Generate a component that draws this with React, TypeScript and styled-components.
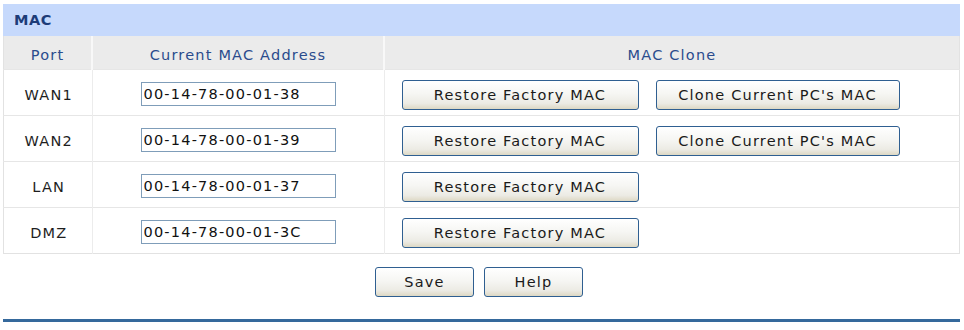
import * as React from 'react'
import styled, { createGlobalStyle } from 'styled-components'

const GlobalStyle = createGlobalStyle`
  html, body {
    margin: 0;
    padding: 0;
    background: #ffffff;
  }
  body {
    font-family: 'DejaVu Sans', Verdana, sans-serif;
  }
`

const Page = styled.div`
  width: 957px;
  padding: 4px 4px 0 3px;
`

const TitleBar = styled.div`
  height: 32px;
  line-height: 32px;
  padding-left: 11px;
  background: #c6d9fc;
  color: #1d3c78;
  font-weight: bold;
  font-size: 14.5px;
  letter-spacing: 0.6px;
`

const Table = styled.table`
  width: 100%;
  border-collapse: collapse;
  border: 1px solid #e2e2e2;
  border-top: none;
  table-layout: fixed;
`

const HeadCell = styled.th<{ $w?: number }>`
  ${({ $w }) => ($w ? `width: ${$w}px;` : '')}
  height: 29px;
  padding: 4px 0 0 0;
  background: #ebebeb;
  color: #2a4b8d;
  font-weight: normal;
  font-size: 14.5px;
  letter-spacing: 1.2px;
  text-align: center;
  border-left: 2px solid #f8f8f8;
  &:first-child {
    border-left: none;
  }
`

const Cell = styled.td<{ $align?: string }>`
  height: 41px;
  padding: 4px 0 0 0;
  border-top: 1px solid #e6e6e6;
  border-left: 1px solid #ececec;
  text-align: ${({ $align }) => $align || 'center'};
  vertical-align: middle;
  font-size: 14.5px;
  letter-spacing: 1.2px;
  color: #1e1e1e;
  &:first-child {
    border-left: none;
  }
`

const PortLabel = styled.span`
  display: inline-block;
  padding-left: 2px;
`

const MacInput = styled.input`
  box-sizing: border-box;
  display: block;
  width: 195px;
  height: 24px;
  margin: 0 auto 2px auto;
  padding: 0 2px;
  border: 1px solid #7f9db9;
  font-family: 'DejaVu Sans', Verdana, sans-serif;
  font-size: 14.5px;
  letter-spacing: 1.2px;
  color: #111;
  background: #fff;
  outline: none;
`

const ButtonRow = styled.div`
  display: flex;
  align-items: center;
  gap: 17px;
  padding-left: 17px;
`

const Button = styled.button<{ $w: number }>`
  box-sizing: border-box;
  width: ${({ $w }) => $w}px;
  height: 30px;
  padding: 0;
  border: 1px solid #2f5f91;
  border-radius: 3px;
  background: linear-gradient(
    to bottom,
    #ffffff 0%,
    #f6f6f3 45%,
    #ecebe4 80%,
    #ddd8c4 100%
  );
  color: #1a1a1a;
  font-family: 'DejaVu Sans', Verdana, sans-serif;
  font-size: 14.5px;
  letter-spacing: 1.2px;
  cursor: pointer;
`

const Footer = styled.div`
  display: flex;
  justify-content: center;
  gap: 10px;
  padding: 13px 0 0 0;
  margin-left: -5px;
`

const BottomRule = styled.div`
  height: 3px;
  margin-top: 22px;
  background: #35699c;
`

interface IPortRow {
  port: string
  mac: string
  canClone: boolean
}

const rows: IPortRow[] = [
  { port: 'WAN1', mac: '00-14-78-00-01-38', canClone: true },
  { port: 'WAN2', mac: '00-14-78-00-01-39', canClone: true },
  { port: 'LAN', mac: '00-14-78-00-01-37', canClone: false },
  { port: 'DMZ', mac: '00-14-78-00-01-3C', canClone: false }
]

export default function App() {
  return (
    <Page>
      <GlobalStyle />
      <TitleBar>MAC</TitleBar>
      <Table>
        <thead>
          <tr>
            <HeadCell $w={87}>Port</HeadCell>
            <HeadCell $w={290}>Current MAC Address</HeadCell>
            <HeadCell>MAC Clone</HeadCell>
          </tr>
        </thead>
        <tbody>
          {rows.map(row => (
            <tr key={row.port}>
              <Cell>
                <PortLabel>{row.port}</PortLabel>
              </Cell>
              <Cell>
                <MacInput defaultValue={row.mac} />
              </Cell>
              <Cell $align="left">
                <ButtonRow>
                  <Button $w={237}>Restore Factory MAC</Button>
                  {row.canClone && (
                    <Button $w={244}>Clone Current PC's MAC</Button>
                  )}
                </ButtonRow>
              </Cell>
            </tr>
          ))}
        </tbody>
      </Table>
      <Footer>
        <Button $w={99}>Save</Button>
        <Button $w={99}>Help</Button>
      </Footer>
      <BottomRule />
    </Page>
  )
}
